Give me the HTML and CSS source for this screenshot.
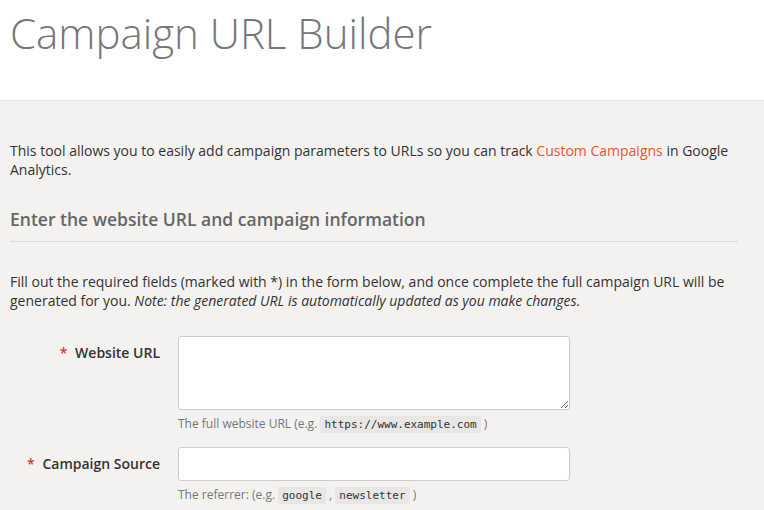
FILE: index.html
```html
<!DOCTYPE html>
<html lang="en">
<head>
  <meta charset="UTF-8" />
  <meta name="viewport" content="width=device-width, initial-scale=1.0"/>
  <title>Campaign URL Builder</title>
  <link rel="stylesheet" href="styles.css">
</head>
<body>
  <header class="page-header">
    <h1>Campaign URL Builder</h1>
  </header>
  <main class="content">
    <p class="intro">This tool allows you to easily add campaign parameters to URLs so you can track <a href="#">Custom Campaigns</a> in Google Analytics.</p>
    <h2>Enter the website URL and campaign information</h2>
    <p class="intro">Fill out the required fields (marked with *) in the form below, and once complete the full campaign URL will be generated for you. <em>Note: the generated URL is automatically updated as you make changes.</em></p>

    <form class="builder">
      <div class="row">
        <label for="url"><span class="req">*</span> Website URL</label>
        <div class="field">
          <textarea id="url"></textarea>
          <p class="hint">The full website URL (e.g. <code>https://www.example.com</code> )</p>
        </div>
      </div>
      <div class="row">
        <label for="source"><span class="req">*</span> Campaign Source</label>
        <div class="field">
          <input type="text" id="source">
          <p class="hint">The referrer: (e.g. <code>google</code> , <code>newsletter</code> )</p>
        </div>
      </div>
    </form>
  </main>
</body>
</html>
```

FILE: styles.css
```css
body {
  margin: 0;
  font-family: "Open Sans", Arial, sans-serif;
  background: #f3f2f0;
  color: #333;
}
.page-header {
  background: #fff;
  border-bottom: 1px solid #e4e3e1;
  height: 100px;
  padding: 0 10px;
}
.page-header h1 {
  margin: 0;
  padding-top: 6px;
  font-size: 42px;
  font-weight: 300;
  color: #75777a;
  line-height: 54px;
}
.content {
  padding: 40px 26px 0 10px;
}
.intro {
  margin: 0 0 16px;
  font-size: 14px;
  line-height: 19px;
}
.intro a {
  color: #e8562a;
  text-decoration: none;
}
h2 {
  margin: 0 0 30px;
  padding: 12px 0 10px;
  font-size: 17.5px;
  font-weight: 600;
  color: #666;
  border-bottom: 1px solid #dcdbd9;
}
.builder {
  margin-top: 26px;
}
.row {
  display: flex;
  margin-bottom: 12px;
}
.row label {
  width: 150px;
  text-align: right;
  padding-top: 7px;
  font-size: 14px;
  font-weight: 600;
  color: #333;
}
.req {
  color: #d9363e;
  margin-right: 4px;
}
.field {
  margin-left: 18px;
}
.field textarea,
.field input {
  display: block;
  width: 392px;
  box-sizing: border-box;
  border: 1px solid #ccc;
  border-radius: 3px;
  background: #fff;
  margin: 0;
}
.field textarea {
  height: 74px;
  resize: vertical;
}
.field input {
  height: 34px;
}
.hint {
  margin: 4px 0 0;
  font-size: 12px;
  color: #777;
  line-height: 20px;
}
.hint code {
  font-family: "DejaVu Sans Mono", monospace;
  font-size: 11px;
  background: #e8e7e5;
  color: #333;
  padding: 2px 4px;
  border-radius: 2px;
}
```
